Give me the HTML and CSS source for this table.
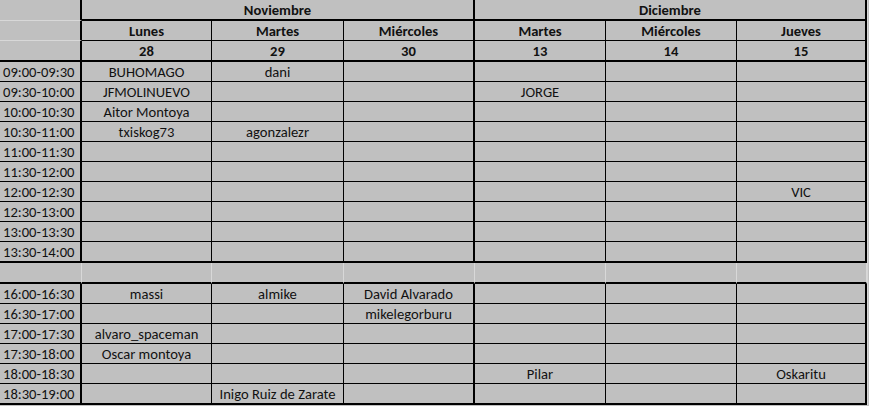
FILE: index.html
```html
<!DOCTYPE html>
<html lang="es">
<head>
<meta charset="utf-8">
<title>Calendario</title>
<link rel="stylesheet" href="styles.css">
</head>
<body>
<div class="sheet">
  <div class="c ht"></div>
  <div class="c h m">Noviembre</div>
  <div class="c h m">Diciembre</div>

  <div class="c ht"></div>
  <div class="c h d">Lunes</div>
  <div class="c h d">Martes</div>
  <div class="c h d g">Miércoles</div>
  <div class="c h d">Martes</div>
  <div class="c h d">Miércoles</div>
  <div class="c h d g">Jueves</div>

  <div class="c t end"></div>
  <div class="c h d end">28</div>
  <div class="c h d end">29</div>
  <div class="c h d g end">30</div>
  <div class="c h d end">13</div>
  <div class="c h d end">14</div>
  <div class="c h d g end">15</div>

  <div class="c t">09:00-09:30</div><div class="c d">BUHOMAGO</div><div class="c d">dani</div><div class="c d g"></div><div class="c d"></div><div class="c d"></div><div class="c d g"></div>
  <div class="c t">09:30-10:00</div><div class="c d">JFMOLINUEVO</div><div class="c d"></div><div class="c d g"></div><div class="c d">JORGE</div><div class="c d"></div><div class="c d g"></div>
  <div class="c t">10:00-10:30</div><div class="c d">Aitor Montoya</div><div class="c d"></div><div class="c d g"></div><div class="c d"></div><div class="c d"></div><div class="c d g"></div>
  <div class="c t">10:30-11:00</div><div class="c d">txiskog73</div><div class="c d">agonzalezr</div><div class="c d g"></div><div class="c d"></div><div class="c d"></div><div class="c d g"></div>
  <div class="c t">11:00-11:30</div><div class="c d"></div><div class="c d"></div><div class="c d g"></div><div class="c d"></div><div class="c d"></div><div class="c d g"></div>
  <div class="c t">11:30-12:00</div><div class="c d"></div><div class="c d"></div><div class="c d g"></div><div class="c d"></div><div class="c d"></div><div class="c d g"></div>
  <div class="c t">12:00-12:30</div><div class="c d"></div><div class="c d"></div><div class="c d g"></div><div class="c d"></div><div class="c d"></div><div class="c d g">VIC</div>
  <div class="c t">12:30-13:00</div><div class="c d"></div><div class="c d"></div><div class="c d g"></div><div class="c d"></div><div class="c d"></div><div class="c d g"></div>
  <div class="c t">13:00-13:30</div><div class="c d"></div><div class="c d"></div><div class="c d g"></div><div class="c d"></div><div class="c d"></div><div class="c d g"></div>
  <div class="c t end">13:30-14:00</div><div class="c d end"></div><div class="c d end"></div><div class="c d g end"></div><div class="c d end"></div><div class="c d end"></div><div class="c d g end"></div>

  <div class="c b"></div><div class="c b"></div><div class="c b"></div><div class="c b"></div><div class="c b"></div><div class="c b"></div><div class="c b"></div>

  <div class="c t">16:00-16:30</div><div class="c d">massi</div><div class="c d">almike</div><div class="c d g">David Alvarado</div><div class="c d"></div><div class="c d"></div><div class="c d g"></div>
  <div class="c t">16:30-17:00</div><div class="c d"></div><div class="c d"></div><div class="c d g">mikelegorburu</div><div class="c d"></div><div class="c d"></div><div class="c d g"></div>
  <div class="c t">17:00-17:30</div><div class="c d">alvaro_spaceman</div><div class="c d"></div><div class="c d g"></div><div class="c d"></div><div class="c d"></div><div class="c d g"></div>
  <div class="c t">17:30-18:00</div><div class="c d">Oscar montoya</div><div class="c d"></div><div class="c d g"></div><div class="c d"></div><div class="c d"></div><div class="c d g"></div>
  <div class="c t">18:00-18:30</div><div class="c d"></div><div class="c d"></div><div class="c d g"></div><div class="c d">Pilar</div><div class="c d"></div><div class="c d g">Oskaritu</div>
  <div class="c t end">18:30-19:00</div><div class="c d end"></div><div class="c d end">Inigo Ruiz de Zarate</div><div class="c d g end"></div><div class="c d end"></div><div class="c d end"></div><div class="c d g end"></div>
</div>
</body>
</html>
```

FILE: styles.css
```css
html, body {
  margin: 0;
  padding: 0;
  background: #c0c0c0;
}

.sheet {
  display: grid;
  grid-template-columns: 82px 130px 132px 131px 131px 131px 130px;
  width: 867px;
  border-right: 1px solid #d6d6d6;
  font-family: "Carlito", "Lato", "Liberation Sans", sans-serif;
  font-size: 14.6px;
  color: #111;
}

.c {
  line-height: 18px;
  padding-top: 1px;
  text-align: center;
  white-space: nowrap;
  overflow: hidden;
  box-sizing: border-box;
}

.h {
  font-weight: bold;
}

/* header time column (no dark rules) */
.ht {
  border-right: 2px solid #000;
  border-bottom: 1px solid #d8d8d8;
}

/* month header cells */
.m {
  grid-column: span 3;
  border-right: 2px solid #000;
  border-bottom: 2px solid #000;
  padding-top: 2px;
  line-height: 17px;
}

/* time slot cells */
.t {
  text-align: left;
  padding-left: 3px;
  border-right: 2px solid #000;
  border-bottom: 1px solid #000;
}

/* data cells */
.d {
  border-right: 1px solid #000;
  border-bottom: 1px solid #000;
}

.g {
  border-right-width: 2px;
}

.end {
  border-bottom-width: 2px;
}

/* blank separator row */
.b {
  border-right: 1px solid #d8d8d8;
  border-bottom: 2px solid #000;
  height: 21px;
}
```
